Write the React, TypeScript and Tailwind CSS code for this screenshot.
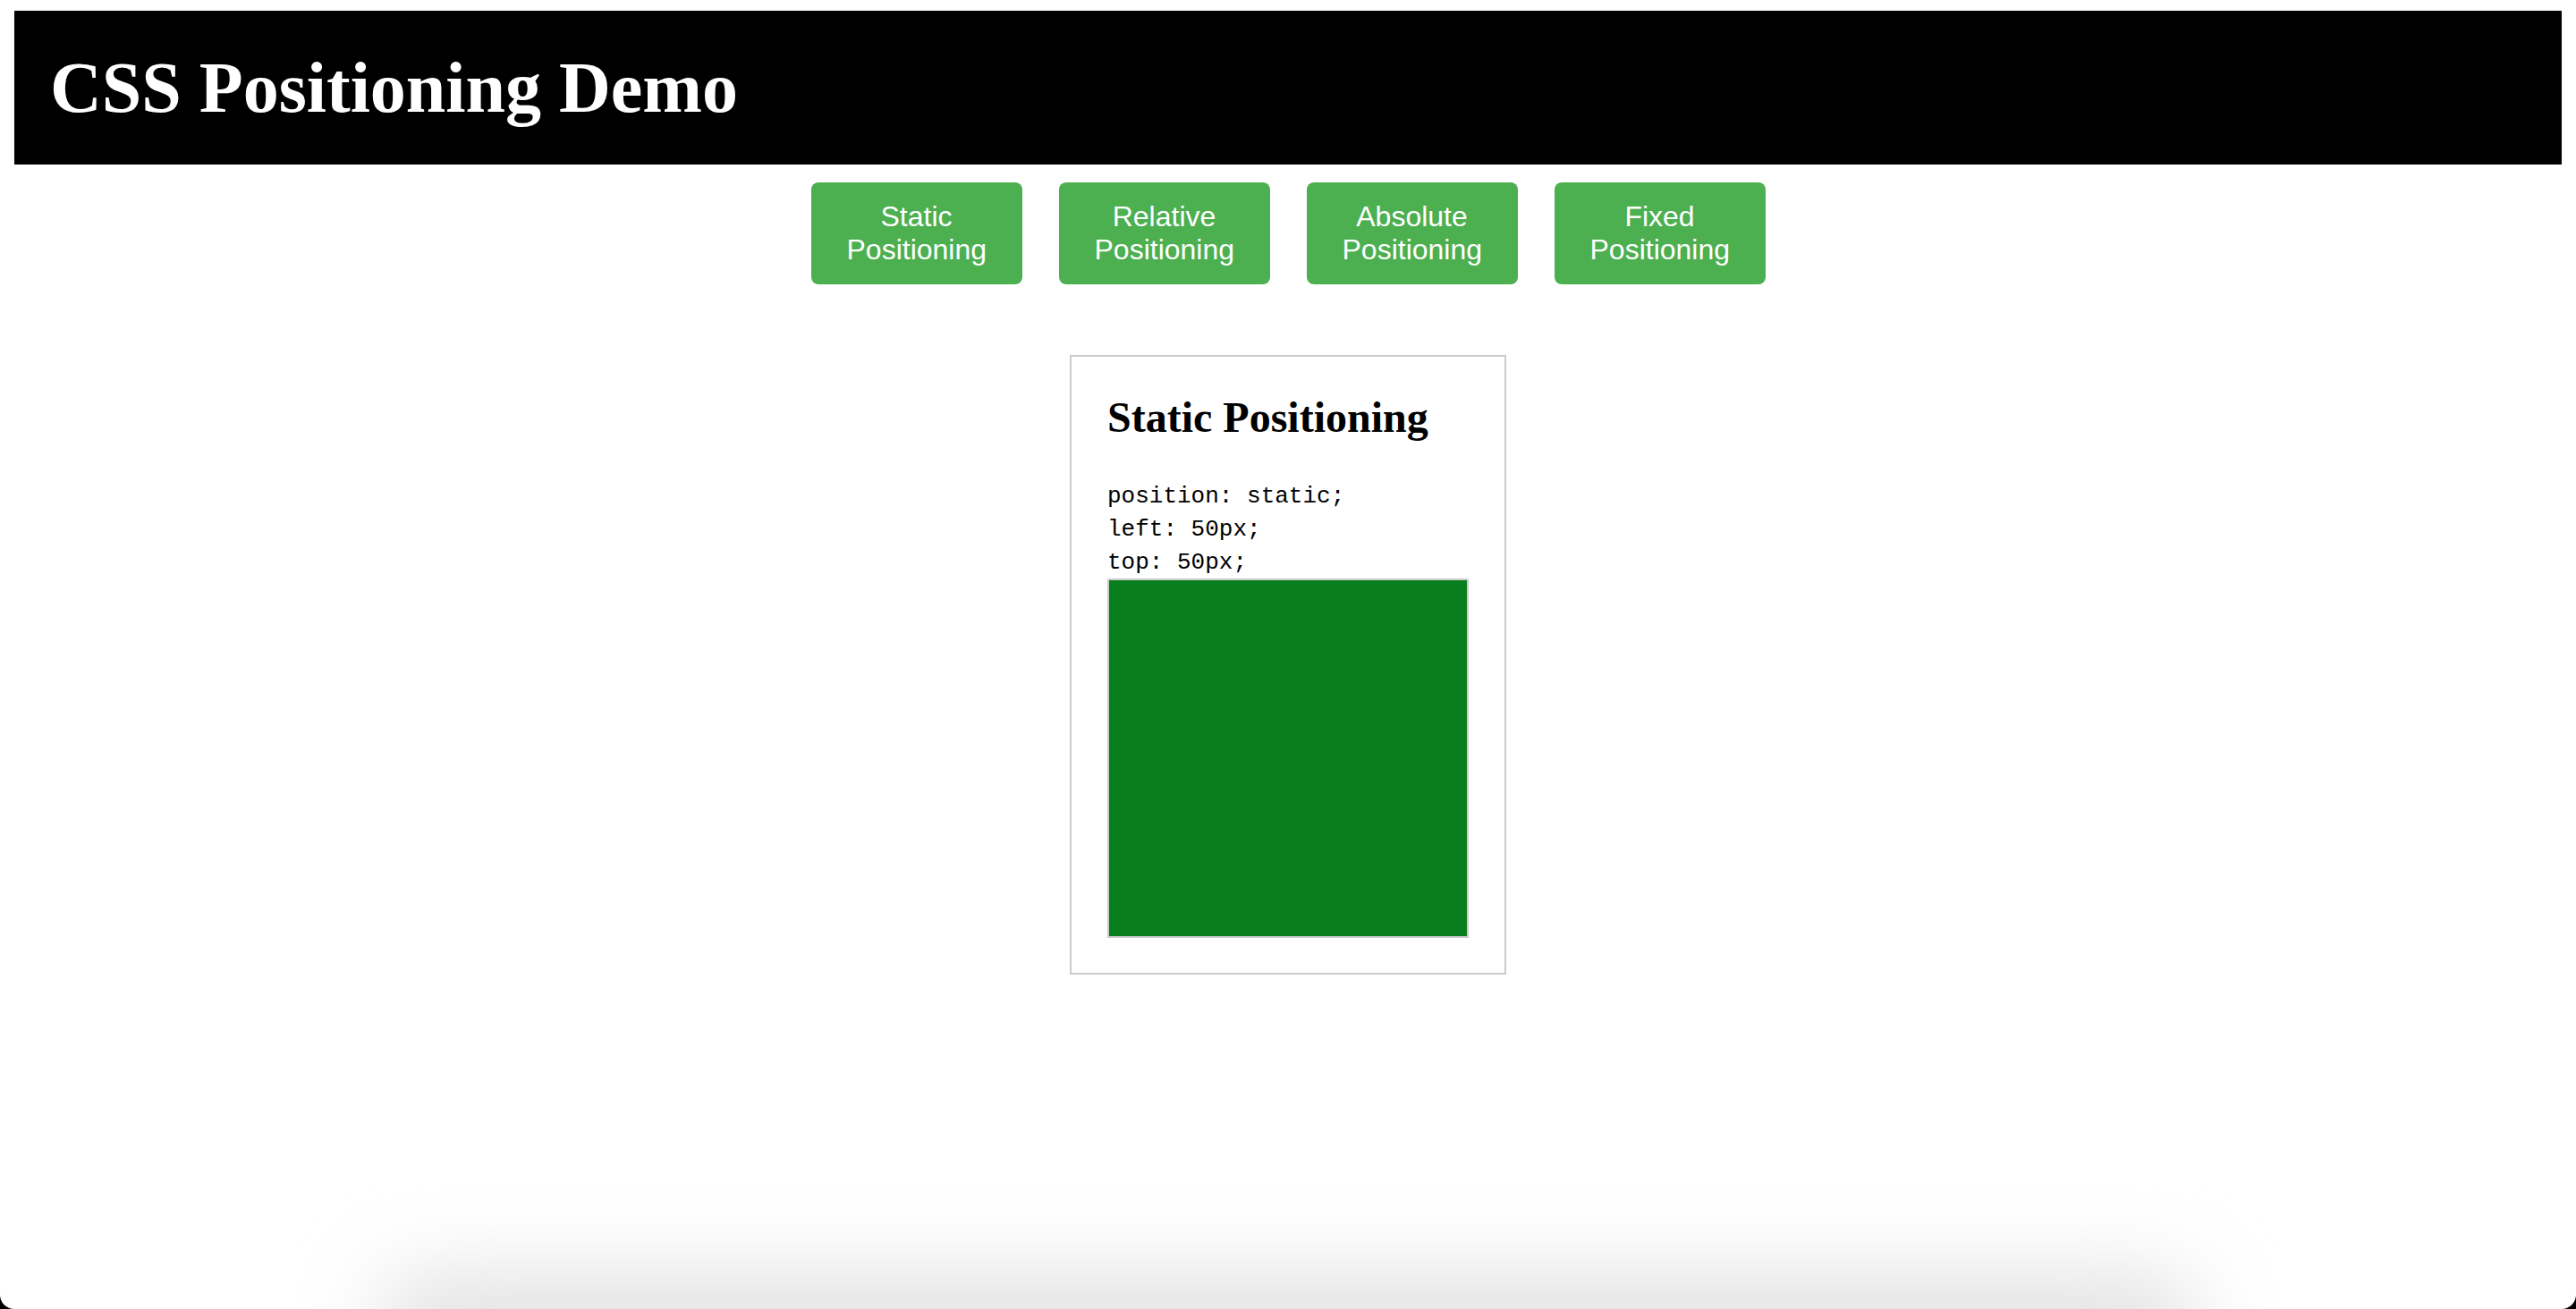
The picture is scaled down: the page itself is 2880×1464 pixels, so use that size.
const buttons = [
  "Static Positioning",
  "Relative Positioning",
  "Absolute Positioning",
  "Fixed Positioning",
];

const codeLines = ["position: static;", "left: 50px;", "top: 50px;"];

export default function App() {
  return (
    <div className="relative h-[1464px] w-full overflow-hidden bg-white">
      <header className="mx-[16px] mt-[12px] bg-black px-[40px] py-[40px]">
        <h1 className="font-['Liberation_Serif',serif] text-[80px] font-bold leading-[92px] text-white">
          CSS Positioning Demo
        </h1>
      </header>

      <nav className="mt-[20px] flex justify-center gap-[41px]">
        {buttons.map((label) => (
          <button
            key={label}
            className="w-[236px] rounded-[8px] bg-[#4caf50] px-[40px] py-[20px] text-center font-['Liberation_Sans',Arial,sans-serif] text-[32px] leading-[37px] text-white"
          >
            {label}
          </button>
        ))}
      </nav>

      <main className="mt-[79px] flex justify-center">
        <section className="w-[488px] border-2 border-[#cccccc] px-[40px] pt-[40px] pb-[39px]">
          <h2 className="font-['Liberation_Serif',serif] text-[48px] font-bold leading-[55px] text-black">
            Static Positioning
          </h2>
          <div className="mt-[42px] font-['Liberation_Mono','Courier_New',monospace] text-[26px] leading-[37px] text-black">
            {codeLines.map((line) => (
              <div key={line} className="pt-[1px] -mb-[1px]">
                {line}
              </div>
            ))}
          </div>
          <div className="h-[402px] w-[404px] border-2 border-[#cccccc] bg-[#087f1c]" />
        </section>
      </main>

      {/* window shadow + rounded corners along the bottom edge */}
      <div className="pointer-events-none absolute bottom-[-80px] left-[420px] right-[420px] h-[120px] rounded-full bg-[#e2e2e2] blur-[45px]" />
      <div className="absolute bottom-0 left-0 h-[16px] w-[16px] bg-black">
        <div className="h-full w-full rounded-bl-[16px] bg-white" />
      </div>
      <div className="absolute bottom-0 right-0 h-[16px] w-[16px] bg-black">
        <div className="h-full w-full rounded-br-[16px] bg-white" />
      </div>
    </div>
  );
}
